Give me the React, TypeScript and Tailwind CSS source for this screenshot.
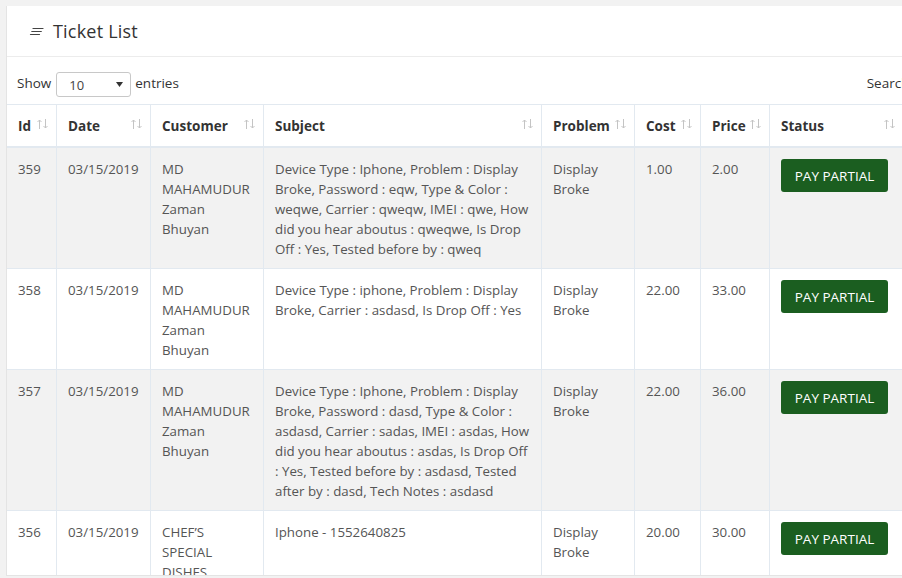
import React from "react";

interface Ticket {
  id: number;
  date: string;
  customer: string[];
  subject: string[];
  problem: string[];
  cost: string;
  price: string;
}

const tickets: Ticket[] = [
  {
    id: 359,
    date: "03/15/2019",
    customer: ["MD", "MAHAMUDUR", "Zaman", "Bhuyan"],
    subject: [
      "Device Type : Iphone, Problem : Display",
      "Broke, Password : eqw, Type & Color :",
      "weqwe, Carrier : qweqw, IMEI : qwe, How",
      "did you hear aboutus : qweqwe, Is Drop",
      "Off : Yes, Tested before by : qweq",
    ],
    problem: ["Display", "Broke"],
    cost: "1.00",
    price: "2.00",
  },
  {
    id: 358,
    date: "03/15/2019",
    customer: ["MD", "MAHAMUDUR", "Zaman", "Bhuyan"],
    subject: [
      "Device Type : iphone, Problem : Display",
      "Broke, Carrier : asdasd, Is Drop Off : Yes",
    ],
    problem: ["Display", "Broke"],
    cost: "22.00",
    price: "33.00",
  },
  {
    id: 357,
    date: "03/15/2019",
    customer: ["MD", "MAHAMUDUR", "Zaman", "Bhuyan"],
    subject: [
      "Device Type : Iphone, Problem : Display",
      "Broke, Password : dasd, Type & Color :",
      "asdasd, Carrier : sadas, IMEI : asdas, How",
      "did you hear aboutus : asdas, Is Drop Off",
      ": Yes, Tested before by : asdasd, Tested",
      "after by : dasd, Tech Notes : asdasd",
    ],
    problem: ["Display", "Broke"],
    cost: "22.00",
    price: "36.00",
  },
  {
    id: 356,
    date: "03/15/2019",
    customer: ["CHEF\u2019S", "SPECIAL", "DISHES"],
    subject: ["Iphone - 1552640825"],
    problem: ["Display", "Broke"],
    cost: "20.00",
    price: "30.00",
  },
];

const columns = ["Id", "Date", "Customer", "Subject", "Problem", "Cost", "Price", "Status"];

const gridCols = "grid grid-cols-[50px_94px_113px_278px_93px_66px_69px_133px]";

const SortIcon = () => (
  <svg width="11" height="10" viewBox="0 0 11 10" className="mt-[3px] shrink-0">
    <g stroke="#c4c4c4" strokeWidth="1" fill="none">
      <path d="M2.5 10V1M0.5 3l2-2 2 2" />
      <path d="M8.5 0v9M6.5 7l2 2 2-2" />
    </g>
  </svg>
);

const Lines = ({ lines }: { lines: string[] }) => (
  <>
    {lines.map((l, i) => (
      <div key={i} className="whitespace-nowrap">
        {l}
      </div>
    ))}
  </>
);

const App: React.FC = () => {
  return (
    <div
      className="w-[902px] h-[578px] overflow-hidden bg-[#f2f2f2] pt-[6px] pl-[6px]"
      style={{ fontFamily: '"Open Sans", "Noto Sans", sans-serif' }}
    >
      <div className="w-[1000px] h-[570px] bg-white border-l border-b border-[#e4e4e4] overflow-hidden flex flex-col">
        {/* card header */}
        <div className="h-[51px] shrink-0 border-b border-[#ececec] flex items-center pl-[22px] gap-[9px]">
          <svg width="15" height="9" viewBox="0 0 15 9">
            <g stroke="#444" strokeWidth="1.2" strokeLinecap="round">
              <path d="M4 1.5h10" />
              <path d="M2.8 4.5h9.5" />
              <path d="M1.5 7.5h9" />
            </g>
          </svg>
          <h2 className="text-[18px] font-medium text-[#333] tracking-[0.2px]">Ticket List</h2>
        </div>

        {/* show entries / search */}
        <div className="h-[47px] shrink-0 flex items-center justify-between pt-[6px] pl-[10px] pr-[10px] text-[13.5px] text-[#333]">
          <div className="flex items-center">
            <span>Show</span>
            <div className="ml-[5px] w-[75px] h-[25px] border border-[#c8c8c8] rounded-[3px] flex items-center justify-between pl-[12px] pr-[7px] mt-[2px]">
              <span className="text-[13px] text-[#444] mt-[3px]">10</span>
              <svg width="7" height="5" viewBox="0 0 7 5">
                <path d="M0 0h7L3.5 5z" fill="#333" />
              </svg>
            </div>
            <span className="ml-[4px]">entries</span>
          </div>
          <div className="flex items-center gap-[6px]">
            <span>Search:</span>
            <div className="w-[77px] h-[25px] border border-[#c8c8c8] rounded-[3px]" />
          </div>
        </div>

        {/* table */}
        <div className="text-[13.3px] leading-[20px] text-[#555]">
          <div className={`${gridCols} border-t border-b-2 border-[#e2e9f0] bg-white`}>
            {columns.map((c, i) => (
              <div
                key={c}
                className={`pt-[11px] pb-[10px] pl-[11px] pr-[8px] flex justify-between font-bold text-[#333] text-[13.5px] ${
                  i < columns.length - 1 ? "border-r border-[#e2e9f0]" : ""
                }`}
              >
                <span>{c}</span>
                <SortIcon />
              </div>
            ))}
          </div>

          {tickets.map((t, ri) => (
            <div
              key={t.id}
              className={`${gridCols} ${ri > 0 ? "border-t border-[#e2e9f0]" : ""} ${
                ri % 2 === 0 ? "bg-[#f2f2f2]" : "bg-white"
              }`}
            >
              <div className="px-[11px] pt-[11px] pb-[9px] border-r border-[#e2e9f0]">{t.id}</div>
              <div className="px-[11px] pt-[11px] pb-[9px] border-r border-[#e2e9f0]">{t.date}</div>
              <div className="px-[11px] pt-[11px] pb-[9px] border-r border-[#e2e9f0]">
                <Lines lines={t.customer} />
              </div>
              <div className="px-[11px] pt-[11px] pb-[9px] border-r border-[#e2e9f0]">
                <Lines lines={t.subject} />
              </div>
              <div className="px-[11px] pt-[11px] pb-[9px] border-r border-[#e2e9f0]">
                <Lines lines={t.problem} />
              </div>
              <div className="px-[11px] pt-[11px] pb-[9px] border-r border-[#e2e9f0]">{t.cost}</div>
              <div className="px-[11px] pt-[11px] pb-[9px] border-r border-[#e2e9f0]">{t.price}</div>
              <div className="px-[11px] pt-[11px] pb-[9px]">
                <button className="w-[107px] h-[33px] bg-[#1b5e20] text-white text-[13.5px] rounded-[3px] uppercase">
                  Pay Partial
                </button>
              </div>
            </div>
          ))}
        </div>
      </div>
    </div>
  );
};

export default App;
